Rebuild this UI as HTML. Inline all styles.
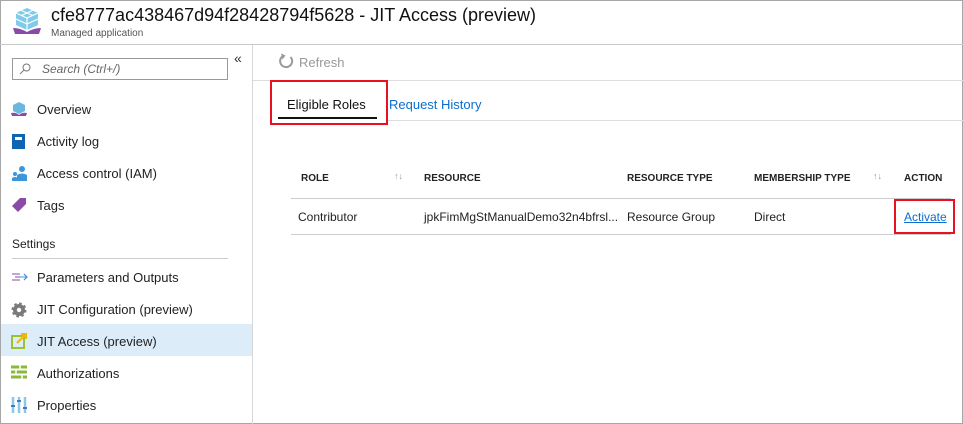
<!DOCTYPE html>
<html><head><style>
*{margin:0;padding:0;box-sizing:border-box}
body{width:963px;height:424px;background:#fff;font-family:"Liberation Sans",sans-serif;color:#222;position:relative;overflow:hidden;font-size:13px}
.frame{position:absolute;left:0;top:0;width:963px;height:424px;border:1px solid #a6a6a6}
.abs{position:absolute;white-space:nowrap}
.hdr{left:0;top:44px;width:963px;height:1px;background:#c8c8c8}
.side{left:252px;top:45px;width:1px;height:379px;background:#d6d6d6}
.nav{left:37px;font-size:13px;color:#222}
.th{font-size:10px;font-weight:bold;color:#222;top:173px}
.td{font-size:12px;color:#222;top:210px}
</style></head><body>
<div class="frame"></div>
<svg class="abs" style="left:12px;top:6px" width="30" height="30" viewBox="0 0 30 30">
<path d="M15 2 L26 7 L26 19 L15 24 L4 19 L4 7Z" fill="#7fcbe8"/>
<path d="M4 7 L15 12 L26 7 M15 12 L15 24 M9.5 4.5 L20.5 9.5 M20.5 4.5 L9.5 9.5 M4 13 L15 18 L26 13" stroke="#fff" stroke-width="1.2" fill="none"/>
<path d="M1 22 Q8 22 15 26 Q22 22 29 22 L27 28 L3 28Z" fill="#8a4ba6"/>
</svg>
<div class="abs" style="left:51px;top:5px;font-size:18px;color:#111">cfe8777ac438467d94f28428794f5628 - JIT Access (preview)</div>
<div class="abs" style="left:51px;top:28px;font-size:10px;color:#555">Managed application</div>
<div class="abs hdr"></div>
<div class="abs side"></div>
<div class="abs" style="left:234px;top:50px;font-size:14px;color:#333">«</div>
<div class="abs" style="left:12px;top:58px;width:216px;height:22px;border:1px solid #999"></div>
<svg class="abs" style="left:19px;top:63px" width="12" height="12"><circle cx="7.5" cy="4.5" r="3.5" stroke="#777" fill="none"/><path d="M5 7 L1 11" stroke="#777"/></svg>
<div class="abs" style="left:42px;top:62px;font-size:12px;color:#666;font-style:italic">Search (Ctrl+/)</div>

<svg class="abs" style="left:11px;top:102px" width="16" height="14"><path d="M8 0 L14 3 L14 9 L8 12 L2 9 L2 3Z" fill="#6ab8dd"/><path d="M0 11 Q5 10 8 13 Q11 10 16 11 L15 14 L1 14Z" fill="#8a4ba6"/></svg>
<div class="abs nav" style="top:102px">Overview</div>
<div class="abs" style="left:12px;top:134px;width:13px;height:15px;background:#0f64b4"><div style="margin:3px 3px;width:7px;height:3px;background:#fff"></div></div>
<div class="abs nav" style="top:134px">Activity log</div>
<svg class="abs" style="left:11px;top:165px" width="17" height="16"><circle cx="11" cy="4" r="3" fill="#3a96dd"/><path d="M6 16 L6 10 Q11 7 16 10 L16 16Z" fill="#3a96dd"/><circle cx="4" cy="9" r="2" fill="#3a96dd"/><path d="M1 16 L1 13 Q4 11 7 13 L7 16Z" fill="#3a96dd"/></svg>
<div class="abs nav" style="top:166px">Access control (IAM)</div>
<svg class="abs" style="left:11px;top:197px" width="16" height="16"><path d="M1 9 L9 1 L15 1 L15 7 L7 15Z" fill="#8a4ba6"/></svg>
<div class="abs nav" style="top:198px">Tags</div>
<div class="abs" style="left:12px;top:237px;font-size:12px;color:#222">Settings</div>
<div class="abs" style="left:12px;top:258px;width:216px;height:1px;background:#ccc"></div>
<svg class="abs" style="left:11px;top:271px" width="17" height="12"><path d="M1 3 H9 M1 9 H9 M4 6 H16 M13 3 L16 6 L13 9" stroke="#8a4ba6" fill="none"/><path d="M9 6 H16 M13 3 L16 6 L13 9" stroke="#3a96dd" fill="none"/></svg>
<div class="abs nav" style="top:270px">Parameters and Outputs</div>
<svg class="abs" style="left:11px;top:302px" width="16" height="16"><circle cx="8" cy="8" r="6" fill="#7a7a7a" stroke="#7a7a7a" stroke-width="3" stroke-dasharray="2.4 2.3"/><circle cx="8" cy="8" r="2.2" fill="#fff"/></svg>
<div class="abs nav" style="top:302px">JIT Configuration (preview)</div>
<div class="abs" style="left:1px;top:324px;width:251px;height:32px;background:#dcecf9"></div>
<svg class="abs" style="left:11px;top:332px" width="17" height="17"><rect x="1" y="4" width="12" height="12" fill="none" stroke="#9cc32b" stroke-width="2"/><path d="M6 11 L15 2 M10 2 H15 V7" stroke="#f2b705" stroke-width="2" fill="none"/></svg>
<div class="abs nav" style="top:334px">JIT Access (preview)</div>
<svg class="abs" style="left:11px;top:365px" width="17" height="15"><path d="M0 2 H16 M0 7 H16 M0 12 H16" stroke="#8ab83a" stroke-width="3"/><path d="M9 0 V4 M5 5 V9 M11 10 V14" stroke="#fff" stroke-width="1.5"/></svg>
<div class="abs nav" style="top:366px">Authorizations</div>
<svg class="abs" style="left:11px;top:397px" width="16" height="16"><path d="M2 0 V16 M8 0 V16 M14 0 V16" stroke="#8ec6e8" stroke-width="2.5"/><path d="M0 9 H4 M6 4 H10 M12 11 H16" stroke="#3a7bc8" stroke-width="2"/></svg>
<div class="abs nav" style="top:398px">Properties</div>

<svg class="abs" style="left:278px;top:53px" width="16" height="16"><path d="M12.5 4 A6 6 0 1 1 6 2.5" stroke="#999" stroke-width="2" fill="none"/><path d="M3 0.5 L7.5 2.5 L4.5 6.5Z" fill="#999"/></svg>
<div class="abs" style="left:299px;top:55px;font-size:13px;color:#999">Refresh</div>
<div class="abs" style="left:253px;top:80px;width:710px;height:1px;background:#ddd"></div>
<div class="abs" style="left:287px;top:97px;font-size:13px;color:#111">Eligible Roles</div>
<div class="abs" style="left:278px;top:117px;width:99px;height:2px;background:#111"></div>
<div class="abs" style="left:270px;top:80px;width:118px;height:45px;border:2px solid #e81123"></div>
<div class="abs" style="left:389px;top:97px;font-size:13px;color:#0a6ed1">Request History</div>
<div class="abs" style="left:388px;top:120px;width:575px;height:1px;background:#ddd"></div>

<div class="abs th" style="left:301px">ROLE</div>
<div class="abs" style="left:394px;top:171px;font-size:9px;color:#999">↑↓</div>
<div class="abs th" style="left:424px">RESOURCE</div>
<div class="abs th" style="left:627px">RESOURCE TYPE</div>
<div class="abs th" style="left:754px">MEMBERSHIP TYPE</div>
<div class="abs" style="left:873px;top:171px;font-size:9px;color:#999">↑↓</div>
<div class="abs th" style="left:904px">ACTION</div>
<div class="abs" style="left:291px;top:198px;width:660px;height:1px;background:#ccc"></div>
<div class="abs td" style="left:298px">Contributor</div>
<div class="abs td" style="left:424px">jpkFimMgStManualDemo32n4bfrsl...</div>
<div class="abs td" style="left:627px">Resource Group</div>
<div class="abs td" style="left:754px">Direct</div>
<div class="abs td" style="left:904px;color:#0a6ed1;text-decoration:underline">Activate</div>
<div class="abs" style="left:894px;top:199px;width:61px;height:35px;border:2px solid #e81123"></div>
<div class="abs" style="left:291px;top:234px;width:660px;height:1px;background:#ccc"></div>
</body></html>
